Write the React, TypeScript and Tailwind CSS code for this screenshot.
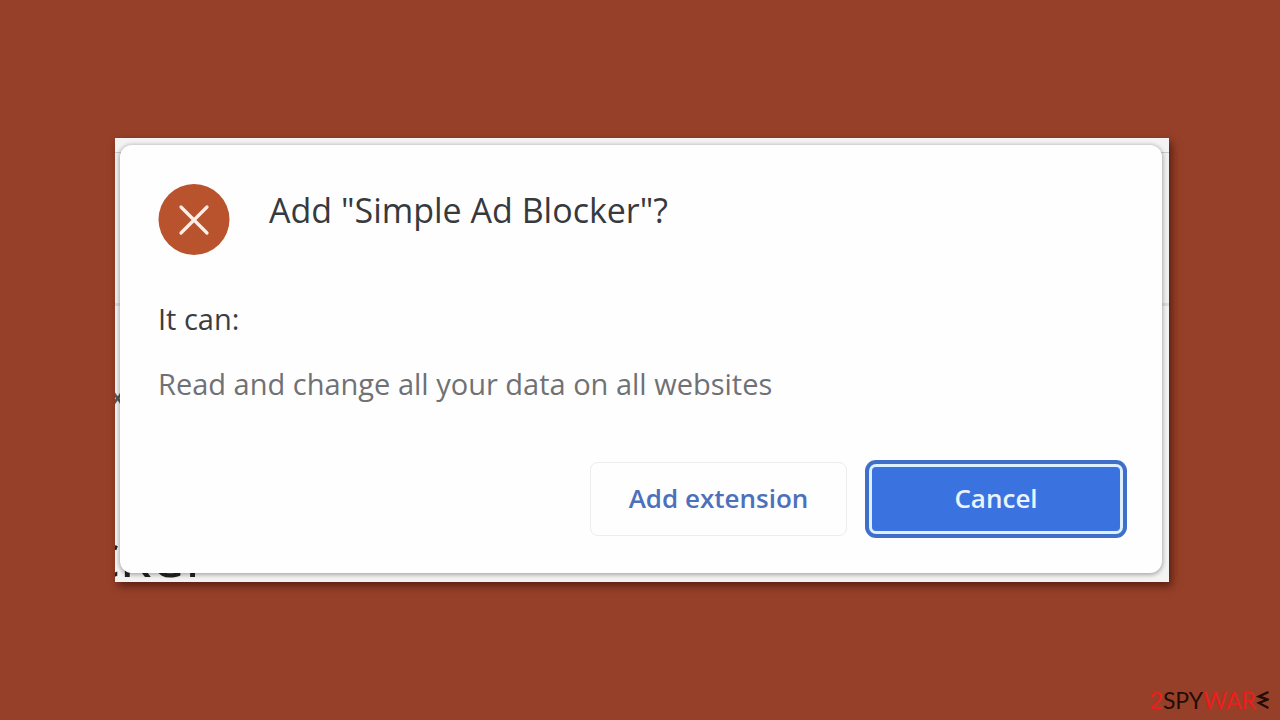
const permissions = ["Read and change all your data on all websites"];

function ExtensionIcon() {
  return (
    <svg className="h-[72px] w-[72px] shrink-0" viewBox="0 0 72 72" fill="none" aria-hidden="true">
      <circle cx="36" cy="35.5" r="35.5" fill="#b9532d" />
      <path d="M23 23L49 49M49 23L23 49" stroke="#fdeee6" strokeWidth="3.2" strokeLinecap="round" />
    </svg>
  );
}

function Watermark() {
  return (
    <footer className="flex justify-end pr-[11px] pb-[5px]">
      <p className="flex items-center font-['Lato',sans-serif] text-[23px] leading-[30px]" aria-label="2SPYWARE">
        <span className="relative text-[#ee1c1c]">
          2
          <span className="absolute bottom-[9px] left-0 h-px w-full bg-[#ee1c1c]" />
        </span>
        <span className="text-[#240d08]">SPY</span>
        <span className="text-[#ee1c1c]">WAR</span>
        <svg className="h-[20px] w-[13px]" viewBox="0 0 13 20" fill="none" aria-hidden="true">
          <path d="M12.5 2L3 6.5L11.5 9.5L3 13L12.5 18" stroke="#240d08" strokeWidth="2.4" />
        </svg>
      </p>
    </footer>
  );
}

export default function App() {
  return (
    <div className="grid min-h-screen grid-rows-[1fr_auto_1fr] bg-[#964029] font-['Open_Sans',sans-serif]">
      <main className="row-start-2 mr-[111px] ml-[115px]">
        <div className="relative overflow-hidden bg-[#f3f3f4] pt-[7px] pr-[7px] pb-[9px] pl-[5px] shadow-[3px_4px_8px_rgba(50,10,0,0.6)]">
          {/* Page showing around the dialog */}
          <div className="absolute inset-x-0 top-[14px] h-[154px] border-t border-b-3 border-t-[#c9c9cb] border-b-[#dcdcde] bg-[#f0f0f1]" />
          <p className="absolute top-[242px] left-[-4px] text-[24px] leading-[32px] font-semibold text-[#555]">x</p>
          <p className="absolute bottom-0 left-[-24px] text-[60px] leading-[56px] text-[#222]">cker</p>

          <section
            role="dialog"
            aria-labelledby="dialog-title"
            className="relative rounded-[12px] bg-[#fefefe] px-[38px] pt-[39px] pb-[35px] shadow-[0_1px_4px_1px_rgba(0,0,0,0.3)]"
          >
            <header className="flex items-start gap-[39px]">
              <ExtensionIcon />
              <h1 id="dialog-title" className="pt-[3px] text-[34px] leading-[46px] text-[#37393d]">
                Add "Simple Ad Blocker"?
              </h1>
            </header>

            <h2 className="mt-[43px] text-[29px] leading-[40px] text-[#3c3d40]">It can:</h2>
            <ul className="mt-[25px] text-[29px] leading-[40px] text-[#707175]">
              {permissions.map((permission) => (
                <li key={permission}>{permission}</li>
              ))}
            </ul>

            <div className="mt-[56px] -mr-[3px] flex items-center justify-end gap-[18px]">
              <button
                type="button"
                className="h-[74px] w-[257px] rounded-[8px] border border-[#ececee] pb-[2px] text-[26px] font-semibold text-[#4d70bd]"
              >
                Add extension
              </button>
              <button
                type="button"
                className="h-[78px] w-[262px] rounded-[11px] bg-[#3f6fc8] p-[4px] text-[26px] font-semibold text-[#e9f4ff]"
              >
                <span className="flex h-full items-center justify-center rounded-[7px] border-[3px] border-[#dcf0ff] bg-[#3a73e0] pb-[2px]">
                  Cancel
                </span>
              </button>
            </div>
          </section>
        </div>
      </main>

      <div className="row-start-3 flex flex-col justify-end">
        <Watermark />
      </div>
    </div>
  );
}
